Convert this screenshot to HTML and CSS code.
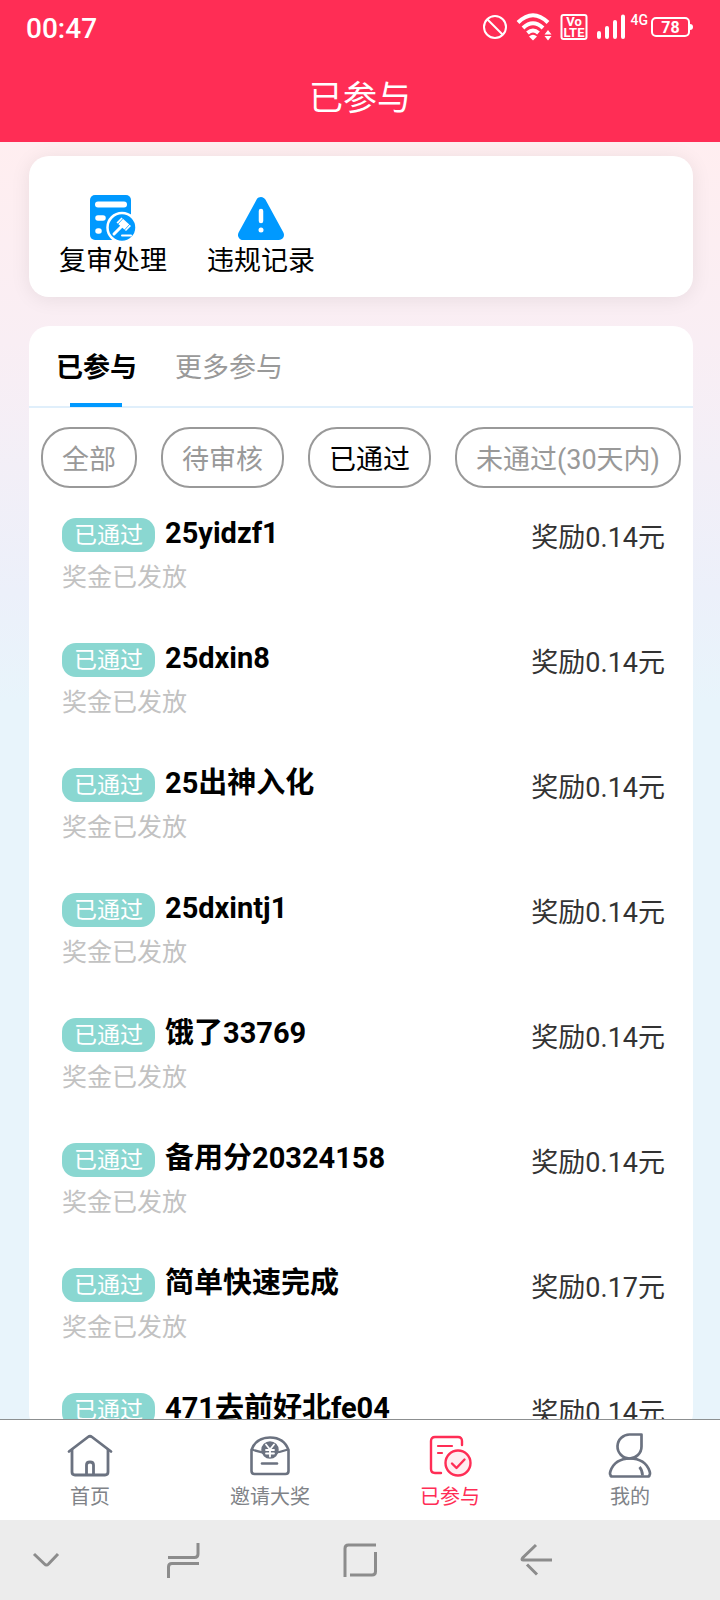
FILE: index.html
```html
<!DOCTYPE html>
<html lang="zh-CN">
<head>
  <meta charset="UTF-8">
  <meta name="viewport" content="width=device-width, initial-scale=1.0">
  <title>已参与</title>
  <link rel="stylesheet" href="styles.css">
</head>
<body>
  <header class="header">
    <div class="status-bar">
      <span class="time">00:47</span>
      <div class="status-icons">
        <svg width="26" height="26" viewBox="0 0 26 26" fill="none" stroke="#fff" stroke-width="2">
          <circle cx="13" cy="13" r="11"/>
          <path d="M5 5l16 16"/>
        </svg>
        <svg width="36" height="28" viewBox="0 0 36 28" fill="none" stroke="#fff" stroke-width="4">
          <path d="M2 9.500Q17-5 32 9.500"/>
          <path d="M7 15Q17 5.500 27 15"/>
          <path d="M11.500 20Q17 15 22.500 20"/>
          <path d="M13 23.500Q17 20 21 23.500L17 27.500z" fill="#fff" stroke="none"/>
          <path d="M32 17l3.500 4.500h-7zM32 27.500l3.500-4.500h-7z" fill="#fff" stroke="none"/>
        </svg>
        <!-- VoLTE -->
        <svg width="28" height="28" viewBox="0 0 28 28">
          <rect x="1.500" y="2" width="25" height="24" rx="2" fill="none" stroke="#fff" stroke-width="2"/>
          <text x="14" y="13" class="volte">Vo</text>
          <text x="14" y="24" class="volte">LTE</text>
        </svg>
        <svg width="30" height="26" viewBox="0 0 30 26" fill="none" stroke="#fff" stroke-width="4" stroke-linecap="round">
          <path d="M3 19v4M11 14v9M19 8v15M27 2.500v20.500"/>
        </svg>
        <span class="network">4G</span>
        <div class="battery">78</div>
      </div>
    </div>
    <h1 class="title">已参与</h1>
  </header>

  <main class="content">
    <!-- Shortcuts -->
    <section class="card shortcuts">
      <a href="#review" class="shortcut">
        <svg width="48" height="48" viewBox="0 0 48 48">
          <rect x="1" y="1" width="41" height="45" rx="5" fill="#0099ff"/>
          <path d="M9 10.500h26" stroke="#fff" stroke-width="6" stroke-linecap="round"/>
          <path d="M9 24h5M9 37h1" stroke="#fff" stroke-width="5.500" stroke-linecap="round"/>
          <circle cx="33" cy="33.500" r="14.500" fill="#0099ff" stroke="#fff" stroke-width="2.500"/>
          <path d="M25 40L34 31" stroke="#fff" stroke-width="3" stroke-linecap="round"/>
          <path d="M32.500 23.500l9.500 8.500-5 5-9.500-8.500z" fill="#fff"/>
          <path d="M28.500 30.500l6-6.500M35 36.500l6-6.500" stroke="#0099ff" stroke-width="0.800"/>
          <path d="M33 41.500h9" stroke="#fff" stroke-width="2" stroke-linecap="round"/>
        </svg>
        <span>复审处理</span>
      </a>
      <a href="#records" class="shortcut">
        <svg width="48" height="48" viewBox="0 0 48 48">
          <path d="M24 8L6 41h36z" fill="#0099ff" stroke="#0099ff" stroke-width="10" stroke-linejoin="round"/>
          <path d="M24 17v10" stroke="#fff" stroke-width="4.500" stroke-linecap="round"/>
          <circle cx="24" cy="36" r="2.500" fill="#fff"/>
        </svg>
        <span>违规记录</span>
      </a>
    </section>

    <section class="card records">
      <nav class="tabs">
        <button class="tab active">已参与</button>
        <button class="tab">更多参与</button>
      </nav>

      <!-- Filter by review status -->
      <div class="filters">
        <button class="filter">全部</button>
        <button class="filter">待审核</button>
        <button class="filter active">已通过</button>
        <button class="filter">未通过(30天内)</button>
      </div>

      <ul class="list">
        <li class="item">
          <div class="item-main">
            <h3 class="item-title"><span class="badge">已通过</span><span class="name">25yidzf1</span></h3>
            <p class="note">奖金已发放</p>
          </div>
          <span class="reward">奖励0.14元</span>
        </li>
        <li class="item">
          <div class="item-main">
            <h3 class="item-title"><span class="badge">已通过</span><span class="name">25dxin8</span></h3>
            <p class="note">奖金已发放</p>
          </div>
          <span class="reward">奖励0.14元</span>
        </li>
        <li class="item">
          <div class="item-main">
            <h3 class="item-title"><span class="badge">已通过</span><span class="name">25出神入化</span></h3>
            <p class="note">奖金已发放</p>
          </div>
          <span class="reward">奖励0.14元</span>
        </li>
        <li class="item">
          <div class="item-main">
            <h3 class="item-title"><span class="badge">已通过</span><span class="name">25dxintj1</span></h3>
            <p class="note">奖金已发放</p>
          </div>
          <span class="reward">奖励0.14元</span>
        </li>
        <li class="item">
          <div class="item-main">
            <h3 class="item-title"><span class="badge">已通过</span><span class="name">饿了33769</span></h3>
            <p class="note">奖金已发放</p>
          </div>
          <span class="reward">奖励0.14元</span>
        </li>
        <li class="item">
          <div class="item-main">
            <h3 class="item-title"><span class="badge">已通过</span><span class="name">备用分20324158</span></h3>
            <p class="note">奖金已发放</p>
          </div>
          <span class="reward">奖励0.14元</span>
        </li>
        <li class="item">
          <div class="item-main">
            <h3 class="item-title"><span class="badge">已通过</span><span class="name">简单快速完成</span></h3>
            <p class="note">奖金已发放</p>
          </div>
          <span class="reward">奖励0.17元</span>
        </li>
        <li class="item">
          <div class="item-main">
            <h3 class="item-title"><span class="badge">已通过</span><span class="name">471去前好北fe04</span></h3>
          </div>
          <span class="reward">奖励0.14元</span>
        </li>
      </ul>
    </section>
  </main>

  <!-- Bottom navigation -->
  <nav class="tabbar">
    <a href="#home" class="tabbar-item">
      <svg width="48" height="48" viewBox="0 0 48 48" fill="none" stroke="#6b7280" stroke-width="2.800" stroke-linecap="round" stroke-linejoin="round">
        <path d="M3 19.500L22 5q2-1.500 4 0l19 14.500"/>
        <path d="M6 18v22q0 3 3 3h30q3 0 3-3V18"/>
        <path d="M20.500 42V33q0-3 3.500-3t3.500 3v9"/>
      </svg>
      <span>首页</span>
    </a>
    <a href="#invite" class="tabbar-item">
      <svg width="48" height="48" viewBox="0 0 48 48" fill="none" stroke="#6b7280" stroke-width="2.600" stroke-linecap="round" stroke-linejoin="round">
        <path d="M5.500 18Q10 5.500 24 5.500t18.500 12.500v21q0 3-3 3h-31q-3 0-3-3z"/>
        <path d="M6 17.500q18 7 36 0" stroke-width="2.200"/>
        <circle cx="24" cy="18" r="8" fill="#6b7280" stroke-width="1.500"/>
        <path d="M20 12.500l4 5 4-5M24 17.500v7M20 18h8M20 21.500h8" stroke="#fff" stroke-width="1.800"/>
        <path d="M16 31.500h15"/>
      </svg>
      <span>邀请大奖</span>
    </a>
    <a href="#joined" class="tabbar-item active">
      <svg width="48" height="48" viewBox="0 0 48 48" fill="none" stroke="#ff2d55" stroke-width="2.400" stroke-linecap="round" stroke-linejoin="round">
        <path d="M36 13V9q0-4-4-4H9Q5 5 5 9v28q0 4 4 4h6"/>
        <path d="M12 14h14M12 21h4" stroke-width="2.200"/>
        <circle cx="32" cy="31" r="12.500" fill="#ffedf1"/>
        <path d="M26 31.500l4.500 4.500 8-8.500"/>
      </svg>
      <span>已参与</span>
    </a>
    <a href="#mine" class="tabbar-item">
      <svg width="48" height="48" viewBox="0 0 48 48" fill="none" stroke="#6b7280" stroke-width="2.700" stroke-linejoin="round">
        <path d="M24 2.500h11.500v12a12 12 0 1 1-11.500-12z"/>
        <path d="M4.500 43q-1-1 0-4Q9 26.500 24 26.500T43.500 39q1 3 0 4 0 1.500-2 1.500h-35q-2 0-2-1.500z"/>
        <path d="M33.500 35q3 3.500 3 8.500"/>
      </svg>
      <span>我的</span>
    </a>
  </nav>

  <!-- Android navigation keys -->
  <footer class="system-bar">
    <button aria-label="收起">
      <svg width="36" height="36" viewBox="0 0 36 36"><path d="M4 12l10.500 10q2 2 4 0L28 12"/></svg>
    </button>
    <button aria-label="最近任务">
      <svg width="36" height="36" viewBox="0 0 36 36"><path d="M32 1v11q0 3.500-3.500 3.500H2M2.500 36V25q0-3.500 3.500-3.500h27"/></svg>
    </button>
    <button aria-label="主屏幕">
      <svg width="36" height="36" viewBox="0 0 36 36"><path d="M3 35V6.500Q3 3 6.500 3H34M8 33h22q3.500 0 3.500-3.500V10"/></svg>
    </button>
    <button aria-label="返回">
      <svg width="36" height="36" viewBox="0 0 36 36"><path d="M18 3L5 15.500q-2 2.500 0 2.500h29M9 22.500l10 10"/></svg>
    </button>
  </footer>
</body>
</html>
```
FILE: styles.css
```css
* {
  box-sizing: border-box;
  margin: 0;
  padding: 0;
}

body {
  display: flex;
  flex-direction: column;
  height: 100vh;
  font-family: Roboto, "Noto Sans CJK SC", sans-serif;
  font-size: 27px;
  color: #000;
  overflow: hidden;
}

button {
  border: none;
  background: none;
  font: inherit;
  cursor: pointer;
}

a {
  color: inherit;
  text-decoration: none;
}

/* Header */
.header {
  background-color: #ff2d55;
  color: #fff;
}

.status-bar {
  display: flex;
  justify-content: space-between;
  align-items: center;
  height: 54px;
  padding: 0 26px;
}

.time {
  padding-top: 2px;
  font-size: 28px;
  font-weight: 500;
}

.status-icons {
  display: flex;
  align-items: center;
  gap: 8px;
}

.volte {
  fill: #fff;
  font-size: 13px;
  font-weight: 700;
  text-anchor: middle;
}

.network {
  align-self: flex-start;
  margin-left: -3px;
  font-size: 14px;
  font-weight: 500;
  line-height: 14px;
}

.battery {
  position: relative;
  width: 39px;
  height: 20px;
  margin-left: -5px;
  margin-right: 4px;
  border: 2px solid #fff;
  border-radius: 5px;
  font-size: 16px;
  font-weight: 700;
  line-height: 17px;
  text-align: center;
}

.battery::after {
  content: "";
  position: absolute;
  top: 5px;
  right: -5px;
  width: 3px;
  height: 6px;
  border-radius: 0 3px 3px 0;
  background-color: #fff;
}

.title {
  height: 88px;
  font-size: 34px;
  font-weight: 400;
  line-height: 88px;
  text-align: center;
}

/* Page content */
.content {
  flex: 1;
  min-height: 0;
  padding: 14px 27px 0 29px;
  overflow: hidden;
  background: linear-gradient(#ffeef0, #f9eef4 200px, #ecf0fa 450px, #e8f4fb 560px);
}

.card {
  border-radius: 20px;
  background-color: #fff;
}

.shortcuts {
  display: flex;
  padding: 38px 10px 17px;
  box-shadow: 0 2px 20px rgba(0, 0, 0, 0.08);
}

.shortcut {
  display: flex;
  flex-direction: column;
  align-items: center;
  width: 148px;
  line-height: 38px;
}

.records {
  margin-top: 29px;
}

/* Tabs */
.tabs {
  display: flex;
  height: 82px;
  padding: 0 8px;
  border-bottom: 2px solid #e0effb;
}

.tab {
  position: relative;
  padding: 0 19px 2px;
  color: #999;
}

.tab.active {
  color: #000;
  font-weight: 700;
}

.tab.active::after {
  content: "";
  position: absolute;
  left: 50%;
  bottom: -1px;
  width: 52px;
  height: 4px;
  margin-left: -27px;
  background-color: #0099ff;
}

/* Filters */
.filters {
  display: flex;
  justify-content: space-between;
  padding: 19px 12px 0;
}

.filter {
  height: 61px;
  padding: 0 19px;
  border: 2px solid #999;
  border-radius: 29px;
  color: #999;
  white-space: nowrap;
}

.filter.active {
  color: #000;
}

/* Records list */
.list {
  list-style: none;
}

.item {
  display: flex;
  justify-content: space-between;
  height: 125px;
  padding: 30px 28px 0 33px;
}

.item:last-child {
  height: auto;
}

.item-title {
  display: flex;
  gap: 10px;
  font-size: 29px;
}

.badge {
  height: 34px;
  padding: 0 12px;
  border-radius: 14px;
  background-color: #8ad7d1;
  color: #fff;
  font-size: 23px;
  font-weight: 400;
  line-height: 36px;
}

.name {
  line-height: 31px;
}

.note {
  padding-top: 8px;
  color: #c2c2c2;
  font-size: 25px;
  line-height: 36px;
}

.reward {
  color: #333;
  line-height: 40px;
}

/* Bottom navigation */
.tabbar {
  position: relative;
  display: grid;
  grid-template-columns: repeat(4, 1fr);
  padding: 12px 0 6px;
  border-top: 1px solid #8c8f90;
  background-color: #fff;
}

.tabbar-item {
  display: flex;
  flex-direction: column;
  align-items: center;
  color: #808388;
  font-size: 20px;
  line-height: 34px;
}

.tabbar-item.active {
  color: #ff2d55;
}

/* System navigation keys */
.system-bar {
  display: grid;
  grid-template-columns: 96px repeat(3, 1fr) 96px;
  height: 80px;
  background-color: #ececec;
}

.system-bar button {
  display: flex;
  justify-content: center;
  align-items: center;
}

.system-bar svg {
  fill: none;
  stroke: #8c8c8c;
  stroke-width: 3;
}
```
